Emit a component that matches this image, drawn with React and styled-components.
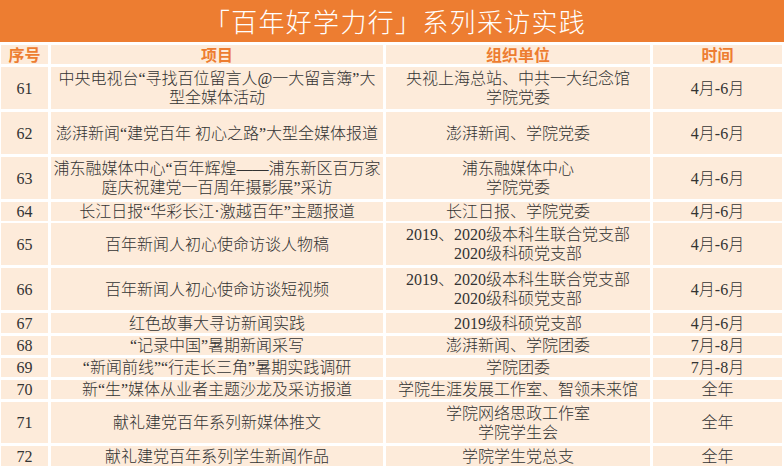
import React from 'react';
import styled, { createGlobalStyle } from 'styled-components';

const GlobalStyle = createGlobalStyle`
  html, body {
    margin: 0;
    padding: 0;
    background: #ffffff;
  }
  body {
    font-family: "Liberation Serif", "Noto Sans CJK SC", serif;
  }
`;

const rows = [
  { no: '61', project: ['中央电视台“寻找百位留言人@一大留言簿”大', '型全媒体活动'], org: ['央视上海总站、中共一大纪念馆', '学院党委'], time: '4月-6月', h: 42 },
  { no: '62', project: ['澎湃新闻“建党百年 初心之路”大型全媒体报道'], org: ['澎湃新闻、学院党委'], time: '4月-6月', h: 42 },
  { no: '63', project: ['浦东融媒体中心“百年辉煌——浦东新区百万家', '庭庆祝建党一百周年摄影展”采访'], org: ['浦东融媒体中心', '学院党委'], time: '4月-6月', h: 42 },
  { no: '64', project: ['长江日报“华彩长江·激越百年”主题报道'], org: ['长江日报、学院党委'], time: '4月-6月', h: 18 },
  { no: '65', project: ['百年新闻人初心使命访谈人物稿'], org: ['2019、2020级本科生联合党支部', '2020级科硕党支部'], time: '4月-6月', h: 42 },
  { no: '66', project: ['百年新闻人初心使命访谈短视频'], org: ['2019、2020级本科生联合党支部', '2020级科硕党支部'], time: '4月-6月', h: 42 },
  { no: '67', project: ['红色故事大寻访新闻实践'], org: ['2019级科硕党支部'], time: '4月-6月', h: 20 },
  { no: '68', project: ['“记录中国”暑期新闻采写'], org: ['澎湃新闻、学院团委'], time: '7月-8月', h: 19 },
  { no: '69', project: ['“新闻前线”“行走长三角”暑期实践调研'], org: ['学院团委'], time: '7月-8月', h: 19 },
  { no: '70', project: ['新“生”媒体从业者主题沙龙及采访报道'], org: ['学院生涯发展工作室、智领未来馆'], time: '全年', h: 19 },
  { no: '71', project: ['献礼建党百年系列新媒体推文'], org: ['学院网络思政工作室', '学院学生会'], time: '全年', h: 41 },
  { no: '72', project: ['献礼建党百年系列学生新闻作品'], org: ['学院学生党总支'], time: '全年', h: 20 },
];

const Page = styled.div`
  width: 784px;
  height: 469px;
  overflow: hidden;
  background: #ffffff;
`;

const TitleBar = styled.header`
  height: 42px;
  background: #ed7d31;
  display: flex;
  align-items: center;
  justify-content: center;
  padding-left: 6px;
  box-sizing: border-box;
`;

const Title = styled.h1`
  margin: 0;
  font-family: "Noto Sans CJK SC", sans-serif;
  font-weight: 300;
  font-size: 26px;
  letter-spacing: 1.3px;
  color: #ffffff;
  line-height: 1;
`;

const Table = styled.div`
  display: flex;
  flex-direction: column;
  gap: 3px;
  padding: 3px 2px 0 1px;
`;

const Row = styled.div`
  display: grid;
  grid-template-columns: 47px 332px 264px 129px;
  column-gap: 3px;
  height: ${p => p.$h}px;
`;

const Cell = styled.div`
  background: #fdebda;
  display: flex;
  flex-direction: column;
  align-items: center;
  justify-content: center;
  text-align: center;
  font-size: 16px;
  font-weight: 300;
  line-height: 19px;
  color: #333333;
  white-space: nowrap;
`;

const HeadCell = styled(Cell)`
  color: #ed7d31;
  font-family: "Noto Sans CJK SC", sans-serif;
  font-weight: 700;
  font-size: 16px;
  line-height: 19px;
`;

const Lines = ({ items }) => items.map((t, i) => <span key={i}>{t}</span>);

export default function App() {
  return (
    <Page>
      <GlobalStyle />
      <TitleBar>
        <Title>「百年好学力行」系列采访实践</Title>
      </TitleBar>
      <Table>
        <Row $h={19}>
          <HeadCell>序号</HeadCell>
          <HeadCell>项目</HeadCell>
          <HeadCell>组织单位</HeadCell>
          <HeadCell>时间</HeadCell>
        </Row>
        {rows.map(r => (
          <Row key={r.no} $h={r.h}>
            <Cell>{r.no}</Cell>
            <Cell><Lines items={r.project} /></Cell>
            <Cell><Lines items={r.org} /></Cell>
            <Cell>{r.time}</Cell>
          </Row>
        ))}
      </Table>
    </Page>
  );
}
